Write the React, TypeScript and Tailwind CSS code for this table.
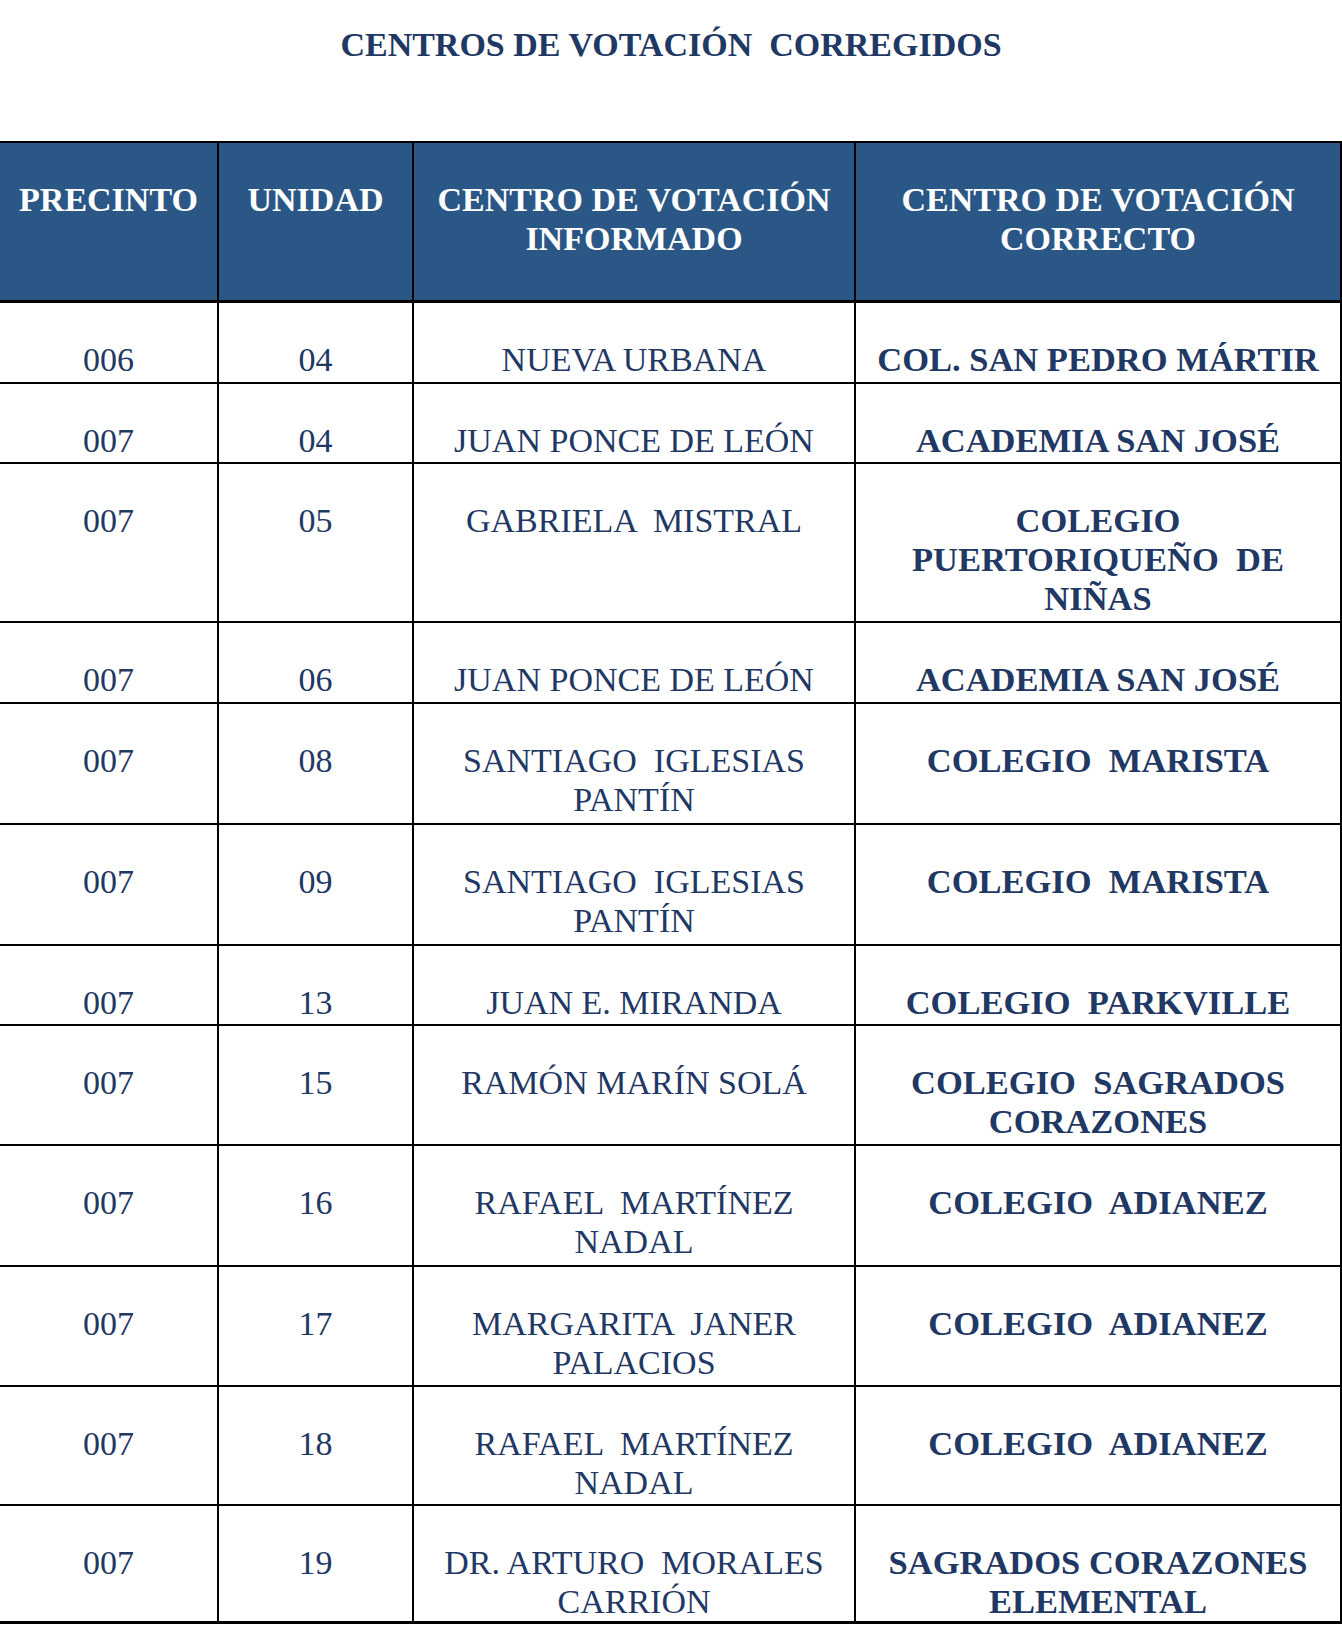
type Row = {
  precinto: string
  unidad: string
  informado: string[]
  correcto: string[]
  h: number
}

const rows: Row[] = [
  { precinto: '006', unidad: '04', informado: ['NUEVA URBANA'], correcto: ['COL. SAN PEDRO MÁRTIR'], h: 81 },
  { precinto: '007', unidad: '04', informado: ['JUAN PONCE DE LEÓN'], correcto: ['ACADEMIA SAN JOSÉ'], h: 80 },
  {
    precinto: '007',
    unidad: '05',
    informado: ['GABRIELA  MISTRAL'],
    correcto: ['COLEGIO', 'PUERTORIQUEÑO  DE', 'NIÑAS'],
    h: 159,
  },
  { precinto: '007', unidad: '06', informado: ['JUAN PONCE DE LEÓN'], correcto: ['ACADEMIA SAN JOSÉ'], h: 81 },
  { precinto: '007', unidad: '08', informado: ['SANTIAGO  IGLESIAS', 'PANTÍN'], correcto: ['COLEGIO  MARISTA'], h: 121 },
  { precinto: '007', unidad: '09', informado: ['SANTIAGO  IGLESIAS', 'PANTÍN'], correcto: ['COLEGIO  MARISTA'], h: 121 },
  { precinto: '007', unidad: '13', informado: ['JUAN E. MIRANDA'], correcto: ['COLEGIO  PARKVILLE'], h: 80 },
  { precinto: '007', unidad: '15', informado: ['RAMÓN MARÍN SOLÁ'], correcto: ['COLEGIO  SAGRADOS', 'CORAZONES'], h: 120 },
  { precinto: '007', unidad: '16', informado: ['RAFAEL  MARTÍNEZ', 'NADAL'], correcto: ['COLEGIO  ADIANEZ'], h: 121 },
  { precinto: '007', unidad: '17', informado: ['MARGARITA  JANER', 'PALACIOS'], correcto: ['COLEGIO  ADIANEZ'], h: 120 },
  { precinto: '007', unidad: '18', informado: ['RAFAEL  MARTÍNEZ', 'NADAL'], correcto: ['COLEGIO  ADIANEZ'], h: 119 },
  {
    precinto: '007',
    unidad: '19',
    informado: ['DR. ARTURO  MORALES', 'CARRIÓN'],
    correcto: ['SAGRADOS CORAZONES', 'ELEMENTAL'],
    h: 118,
  },
]

function Lines({ lines }: { lines: string[] }) {
  return (
    <>
      {lines.map((line) => (
        <div key={line} className="whitespace-pre">
          {line}
        </div>
      ))}
    </>
  )
}

const cell = 'border-r-2 border-black pt-[37px] text-center leading-[39px] overflow-hidden'

export default function App() {
  return (
    <div className="w-[1342px] bg-white font-['Liberation_Serif','Times_New_Roman',serif] text-[#1f3864]">
      <h1 className="pt-[25px] text-center text-[34px] font-bold leading-[40px] whitespace-pre">
        CENTROS DE VOTACIÓN  CORREGIDOS
      </h1>

      <div className="mt-[76px]">
        <div className="grid h-[162px] grid-cols-[219px_195px_442px_486px] border-t-2 border-b-[3px] border-black bg-[#2b5786] text-[34px] font-bold text-white">
          <div className={cell}>PRECINTO</div>
          <div className={cell}>UNIDAD</div>
          <div className={cell}>
            <Lines lines={['CENTRO DE VOTACIÓN', 'INFORMADO']} />
          </div>
          <div className={cell}>
            <Lines lines={['CENTRO DE VOTACIÓN', 'CORRECTO']} />
          </div>
        </div>

        {rows.map((row, i) => (
          <div
            key={i}
            className={`grid grid-cols-[219px_195px_442px_486px] border-black text-[34px] ${
              i === rows.length - 1 ? 'border-b-[3px]' : 'border-b-2'
            }`}
            style={{ height: row.h }}
          >
            <div className={cell}>{row.precinto}</div>
            <div className={cell}>{row.unidad}</div>
            <div className={cell}>
              <Lines lines={row.informado} />
            </div>
            <div className={`${cell} text-[34.5px] font-bold`}>
              <Lines lines={row.correcto} />
            </div>
          </div>
        ))}
      </div>
    </div>
  )
}
